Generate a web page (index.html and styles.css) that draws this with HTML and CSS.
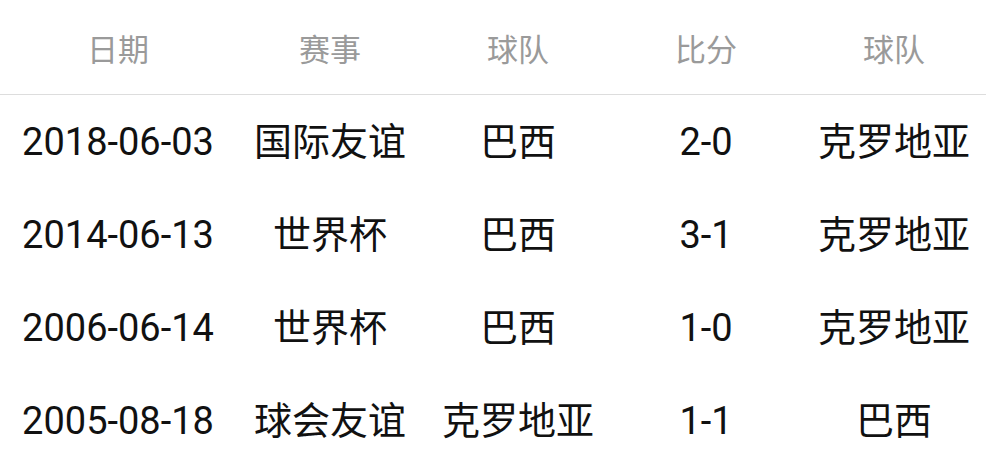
FILE: index.html
```html
<!DOCTYPE html>
<html lang="zh-CN">
<head>
<meta charset="utf-8">
<link rel="stylesheet" href="styles.css">
</head>
<body>
<div class="table">
  <div class="row head">
    <div class="cell">日期</div>
    <div class="cell">赛事</div>
    <div class="cell">球队</div>
    <div class="cell">比分</div>
    <div class="cell">球队</div>
  </div>
  <div class="row">
    <div class="cell">2018-06-03</div>
    <div class="cell">国际友谊</div>
    <div class="cell">巴西</div>
    <div class="cell">2-0</div>
    <div class="cell">克罗地亚</div>
  </div>
  <div class="row">
    <div class="cell">2014-06-13</div>
    <div class="cell">世界杯</div>
    <div class="cell">巴西</div>
    <div class="cell">3-1</div>
    <div class="cell">克罗地亚</div>
  </div>
  <div class="row">
    <div class="cell">2006-06-14</div>
    <div class="cell">世界杯</div>
    <div class="cell">巴西</div>
    <div class="cell">1-0</div>
    <div class="cell">克罗地亚</div>
  </div>
  <div class="row">
    <div class="cell">2005-08-18</div>
    <div class="cell">球会友谊</div>
    <div class="cell">克罗地亚</div>
    <div class="cell">1-1</div>
    <div class="cell">巴西</div>
  </div>
</div>
</body>
</html>
```
FILE: styles.css
```css
html, body {
  margin: 0;
  padding: 0;
  background: #ffffff;
  overflow: hidden;
}
body {
  font-family: Roboto, "Noto Sans CJK SC", sans-serif;
  color: #111111;
}
.table {
  width: 986px;
}
.row {
  display: grid;
  grid-template-columns: 236px repeat(4, 188px);
  height: 93px;
  align-items: center;
  font-size: 38px;
  line-height: 1;
}
.row.head {
  height: 94px;
  box-sizing: border-box;
  padding-top: 6px;
  border-bottom: 1px solid #dddddd;
  font-size: 31px;
  color: #9a9a9a;
  height: 95px;
}
.cell {
  text-align: center;
  white-space: nowrap;
}
```
